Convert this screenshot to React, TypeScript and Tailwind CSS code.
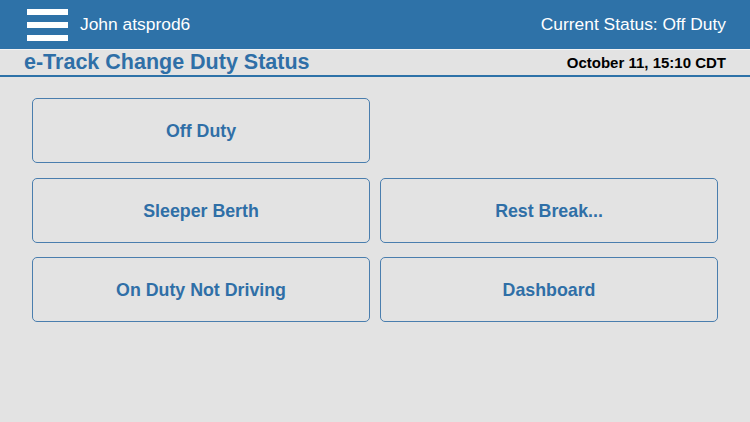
export default function App() {
  const font = { fontFamily: '"Liberation Sans", Arial, sans-serif' };
  const btn =
    "h-[65px] flex items-center justify-center pt-[2px] rounded-[5px] border-[1.5px] border-[#4a7eae] text-[#2f6fa7] font-bold text-[17.8px] bg-transparent";
  return (
    <div className="w-[750px] h-[422px] bg-[#e3e3e3] flex flex-col overflow-hidden" style={font}>
      <div className="h-[49px] bg-[#2e72a8] flex items-center pl-[27px] pr-[24px]">
        <div className="flex flex-col gap-[7px] w-[41px]">
          <div className="h-[6px] bg-white" />
          <div className="h-[6px] bg-white" />
          <div className="h-[6px] bg-white" />
        </div>
        <div className="ml-[12px] text-white text-[17.4px]">John atsprod6</div>
        <div className="ml-auto text-white text-[17.4px]">Current Status: Off Duty</div>
      </div>
      <div className="h-[1px] bg-[#f2f2f2]" />
      <div className="h-[27px] flex items-center pl-[24px] pr-[24px] border-b-2 border-[#2e72a8]">
        <div className="text-[#2f6fa7] font-bold text-[21.5px] leading-none">e-Track Change Duty Status</div>
        <div className="ml-auto text-black font-bold text-[15px] leading-none">October 11, 15:10 CDT</div>
      </div>
      <div className="grid grid-cols-2 gap-x-[10px] gap-y-[14.5px] pl-[32px] pr-[32px] pt-[21px]">
        <div className={btn}>Off Duty</div>
        <div />
        <div className={btn}>Sleeper Berth</div>
        <div className={btn}>Rest Break...</div>
        <div className={btn}>On Duty Not Driving</div>
        <div className={btn}>Dashboard</div>
      </div>
    </div>
  );
}
